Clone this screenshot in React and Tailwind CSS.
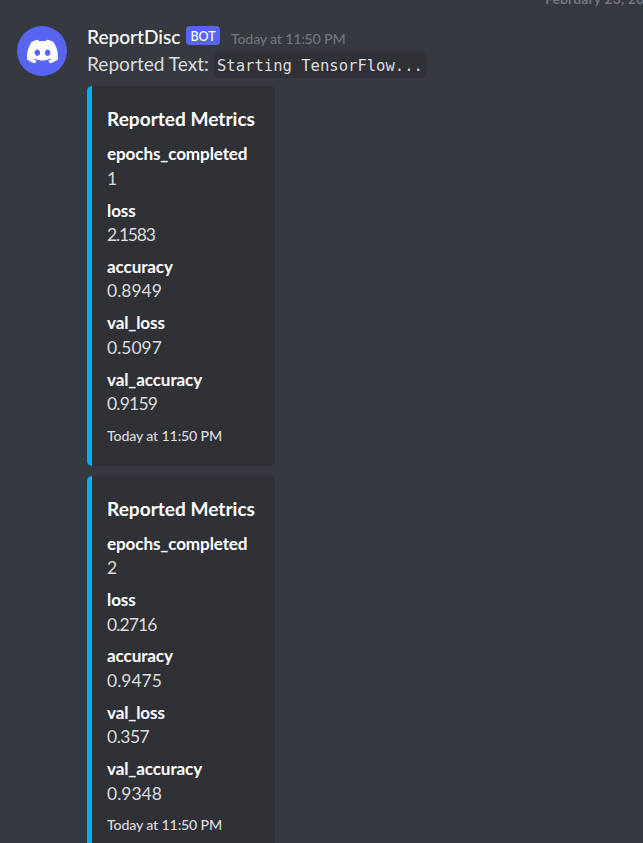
import React from "react";
import { SiDiscord } from "react-icons/si";

const embeds = [
  {
    fields: [
      ["epochs_completed", "1"],
      ["loss", "2.1583", "tracking-[-1.2px]"],
      ["accuracy", "0.8949"],
      ["val_loss", "0.5097"],
      ["val_accuracy", "0.9159", "tracking-[-0.8px]"],
    ],
  },
  {
    fields: [
      ["epochs_completed", "2"],
      ["loss", "0.2716", "tracking-[-0.9px]"],
      ["accuracy", "0.9475"],
      ["val_loss", "0.357", "tracking-[-0.5px]"],
      ["val_accuracy", "0.9348"],
    ],
  },
];

function Field({ name, value, tracking = "" }) {
  return (
    <div className="flex flex-col gap-[2px]">
      <div className="text-[17.1px] font-bold leading-[22.5px] tracking-[-0.12px] text-white">{name}</div>
      <div className={`text-[17.5px] leading-[22.5px] text-[#dcddde] ${tracking}`}>{value}</div>
    </div>
  );
}

function Embed({ fields }) {
  return (
    <article className="h-[379.5px] w-[188px] shrink-0 rounded-[5px] border-l-[5px] border-[#00b0f4] bg-[#2f3136] pl-[15px] pt-[19px]">
      <h2 className="text-[19.1px] font-bold leading-[27.5px] text-white">Reported Metrics</h2>
      <div className="mt-[10.9px] flex flex-col gap-[9.3px]">
        {fields.map(([name, value, tracking]) => (
          <Field key={name} name={name} value={value} tracking={tracking} />
        ))}
      </div>
      <div className="mt-[10.1px] text-[14.2px] font-medium leading-[20px] tracking-[-0.16px] text-[#dcddde]">
        Today at 11:50 PM
      </div>
    </article>
  );
}

export default function App() {
  return (
    <div className="relative h-[843px] w-[643px] overflow-hidden whitespace-nowrap bg-[#36393f] font-['Lato',sans-serif]">
      <div className="absolute left-[545px] top-[-11px] text-[14px] font-bold leading-[20px] tracking-[0.1px] text-[#72767d]">
        February 23, 2022
      </div>
      <div className="flex gap-[20px] pl-[17px] pt-[23px]">
        <div className="mt-[3px] flex size-[50px] shrink-0 items-center justify-center rounded-full bg-[#5865f2] text-white">
          <SiDiscord size={31} />
        </div>
        <div>
          <div className="flex h-[27px] items-start">
            <span className="w-[99px] text-[19.1px] font-medium leading-[27px] text-white">ReportDisc</span>
            <span className="mt-[3px] flex h-[19px] w-[34px] items-center justify-center rounded-[4px] bg-[#5865f2] pt-[2px] text-[12.5px] font-medium leading-[17px] text-white">
              BOT
            </span>
            <span className="ml-[11px] pt-[1px] text-[14.2px] font-medium leading-[29px] tracking-[-0.2px] text-[#72767d]">
              Today at 11:50 PM
            </span>
          </div>
          <div className="flex h-[28px] items-start text-[19.1px] leading-[27px] text-[#dcddde]">
            <span className="w-[127px]">Reported Text:</span>
            <code className="mt-[2px] h-[26px] rounded-[4px] bg-[#2f3136] px-[3px] font-['DejaVu_Sans_Mono',monospace] text-[15.55px] leading-[28px]">
              Starting TensorFlow...
            </code>
          </div>
          <div className="mt-[8px] flex flex-col gap-[10px]">
            {embeds.map((embed, i) => (
              <Embed key={i} fields={embed.fields} />
            ))}
          </div>
        </div>
      </div>
    </div>
  );
}
